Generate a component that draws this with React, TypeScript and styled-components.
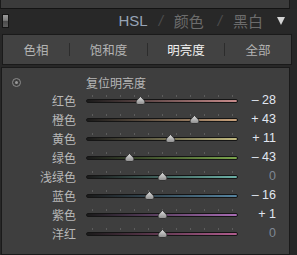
import styled, { createGlobalStyle } from 'styled-components'

const GlobalStyle = createGlobalStyle`
  html, body {
    margin: 0;
    padding: 0;
    background: #272727;
    width: 297px;
    height: 255px;
    overflow: hidden;
  }
  body {
    font-family: "Noto Sans CJK SC", "Liberation Sans", sans-serif;
  }
`

const Root = styled.div`
  width: 297px;
  height: 255px;
  display: flex;
  flex-direction: column;
`

const TopStrip = styled.div`
  width: 288px;
  height: 8px;
  background: #3b3b3b;
  border-left: 1px solid #1a1a1a;
  border-right: 1px solid #1a1a1a;
  border-bottom: 1px solid #141414;
`

const Header = styled.div`
  height: 24px;
  display: flex;
  align-items: center;
  padding: 0 12px 0 2px;
  background: #282828;
`

const ToggleBox = styled.div`
  width: 5px;
  height: 12px;
  border: 1px solid #151515;
  background: linear-gradient(#9a9a9a 0%, #7c7c7c 45%, #4a4a4a 50%, #5e5e5e 100%);
`

const Title = styled.div`
  margin-left: auto;
  display: flex;
  align-items: center;
  height: 22px;
  font-size: 15px;
  line-height: 18px;
`

const TitleItem = styled.span<{ $active?: boolean; $gap: number }>`
  margin-left: ${(p) => p.$gap}px;
  color: ${(p) => (p.$active ? '#97a4b6' : '#6c6c6c')};
  font-family: ${(p) =>
    p.$active
      ? '"Liberation Sans Narrow", "Liberation Sans", sans-serif'
      : '"Noto Sans CJK SC", sans-serif'};
`

const Slash = styled.span<{ $gap: number }>`
  margin-left: ${(p) => p.$gap}px;
  color: #4c4c4c;
  font-family: "Liberation Sans", sans-serif;
  font-size: 15px;
  font-style: italic;
`

const Arrow = styled.span`
  margin-left: 14px;
  width: 0;
  height: 0;
  border-left: 4px solid transparent;
  border-right: 4px solid transparent;
  border-top: 8px solid #d4d4d4;
`

const TabBar = styled.div`
  margin: 1px 0 0 2px;
  width: 288px;
  height: 29px;
  border: 1px solid #1a1a1a;
  background: #424242;
  display: flex;
  align-items: center;
`

const Tab = styled.div<{ $w: number; $active?: boolean }>`
  width: ${(p) => p.$w}px;
  text-align: center;
  font-size: 12.5px;
  color: ${(p) => (p.$active ? '#f2f2f2' : '#b4b4b4')};
`

const TabSep = styled.div`
  width: 1px;
  height: 13px;
  background: #2c2c2c;
`

const Panel = styled.div`
  margin: 2px 0 0 1px;
  width: 287px;
  height: 181px;
  border: 1px solid #1a1a1a;
  background: #3e3e3e;
  padding-top: 6px;
  box-sizing: content-box;
`

const ResetRow = styled.div`
  height: 17px;
  display: flex;
  align-items: center;
`

const ResetIcon = styled.div`
  margin-left: 10px;
  width: 7px;
  height: 7px;
  border: 1px solid #8c8c8c;
  border-radius: 50%;
  display: flex;
  align-items: center;
  justify-content: center;
  &::after {
    content: '';
    width: 3px;
    height: 3px;
    border-radius: 50%;
    background: #9a9a9a;
  }
`

const ResetLabel = styled.span`
  margin-left: 65px;
  font-size: 12px;
  color: #b6b6b6;
`

const Row = styled.div`
  height: 19px;
  display: grid;
  grid-template-columns: 74px 152px 28px;
  column-gap: 10px;
  align-items: center;
`

const Label = styled.span`
  text-align: right;
  font-size: 12px;
  color: #b8b8b8;
`

const Slider = styled.div`
  position: relative;
  height: 19px;
`

const Tick = styled.div`
  position: absolute;
  top: 4px;
  width: 1px;
  height: 2px;
  background: #5c5c5c;
`

const Track = styled.div<{ $color: string }>`
  position: absolute;
  left: 0;
  right: 0;
  top: 8px;
  height: 2px;
  border: 1px solid #151515;
  border-radius: 2px;
  background: linear-gradient(to right, #1a1a1a, ${(p) => p.$color});
`

const Thumb = styled.svg`
  position: absolute;
  top: 5px;
  width: 11px;
  height: 9px;
  margin-left: -5.5px;
`

const Value = styled.span<{ $zero: boolean }>`
  text-align: right;
  font-family: "Liberation Sans", sans-serif;
  font-size: 12.5px;
  white-space: pre;
  color: ${(p) => (p.$zero ? '#7e8894' : '#e1e7f1')};
`

const rows = [
  { name: '红色', value: -28, color: '#c88c8c' },
  { name: '橙色', value: 43, color: '#c9a27c' },
  { name: '黄色', value: 11, color: '#c2ba80' },
  { name: '绿色', value: -43, color: '#7aa44c' },
  { name: '浅绿色', value: 0, color: '#6cb0a6' },
  { name: '蓝色', value: -16, color: '#5684a0' },
  { name: '紫色', value: 1, color: '#a86cb4' },
  { name: '洋红', value: 0, color: '#b05c8e' },
]

const ticks = Array.from({ length: 11 }, (_, i) => 6 + i * 14)

const formatValue = (v: number) => (v === 0 ? '0' : v > 0 ? `+ ${v}` : `– ${-v}`)

export default function App() {
  return (
    <Root>
      <GlobalStyle />
      <TopStrip />
      <Header>
        <ToggleBox />
        <Title>
          <TitleItem $active $gap={0}>
            HSL
          </TitleItem>
          <Slash $gap={11}>/</Slash>
          <TitleItem $gap={11}>颜色</TitleItem>
          <Slash $gap={14}>/</Slash>
          <TitleItem $gap={11}>黑白</TitleItem>
          <Arrow />
        </Title>
      </Header>
      <TabBar>
        <Tab $w={66}>色相</Tab>
        <TabSep />
        <Tab $w={77}>饱和度</Tab>
        <TabSep />
        <Tab $w={76} $active>
          明亮度
        </Tab>
        <TabSep />
        <Tab $w={66}>全部</Tab>
      </TabBar>
      <Panel>
        <ResetRow>
          <ResetIcon />
          <ResetLabel>复位明亮度</ResetLabel>
        </ResetRow>
        {rows.map((r) => (
          <Row key={r.name}>
            <Label>{r.name}</Label>
            <Slider>
              {ticks.map((t) => (
                <Tick key={t} style={{ left: t }} />
              ))}
              <Track $color={r.color} />
              <Thumb viewBox="0 0 11 9" style={{ left: 76 + (r.value / 100) * 76 }}>
                <defs>
                  <linearGradient id={`g-${r.name}`} x1="0" y1="0" x2="0" y2="1">
                    <stop offset="0" stopColor="#e0e0e0" />
                    <stop offset="1" stopColor="#8c8c8c" />
                  </linearGradient>
                </defs>
                <path
                  d="M5.5 0.5 L9.8 5 Q10.6 8.5 8 8.5 L3 8.5 Q0.4 8.5 1.2 5 Z"
                  fill={`url(#g-${r.name})`}
                  stroke="#2a2a2a"
                  strokeWidth="0.8"
                />
              </Thumb>
            </Slider>
            <Value $zero={r.value === 0}>{formatValue(r.value)}</Value>
          </Row>
        ))}
      </Panel>
    </Root>
  )
}
